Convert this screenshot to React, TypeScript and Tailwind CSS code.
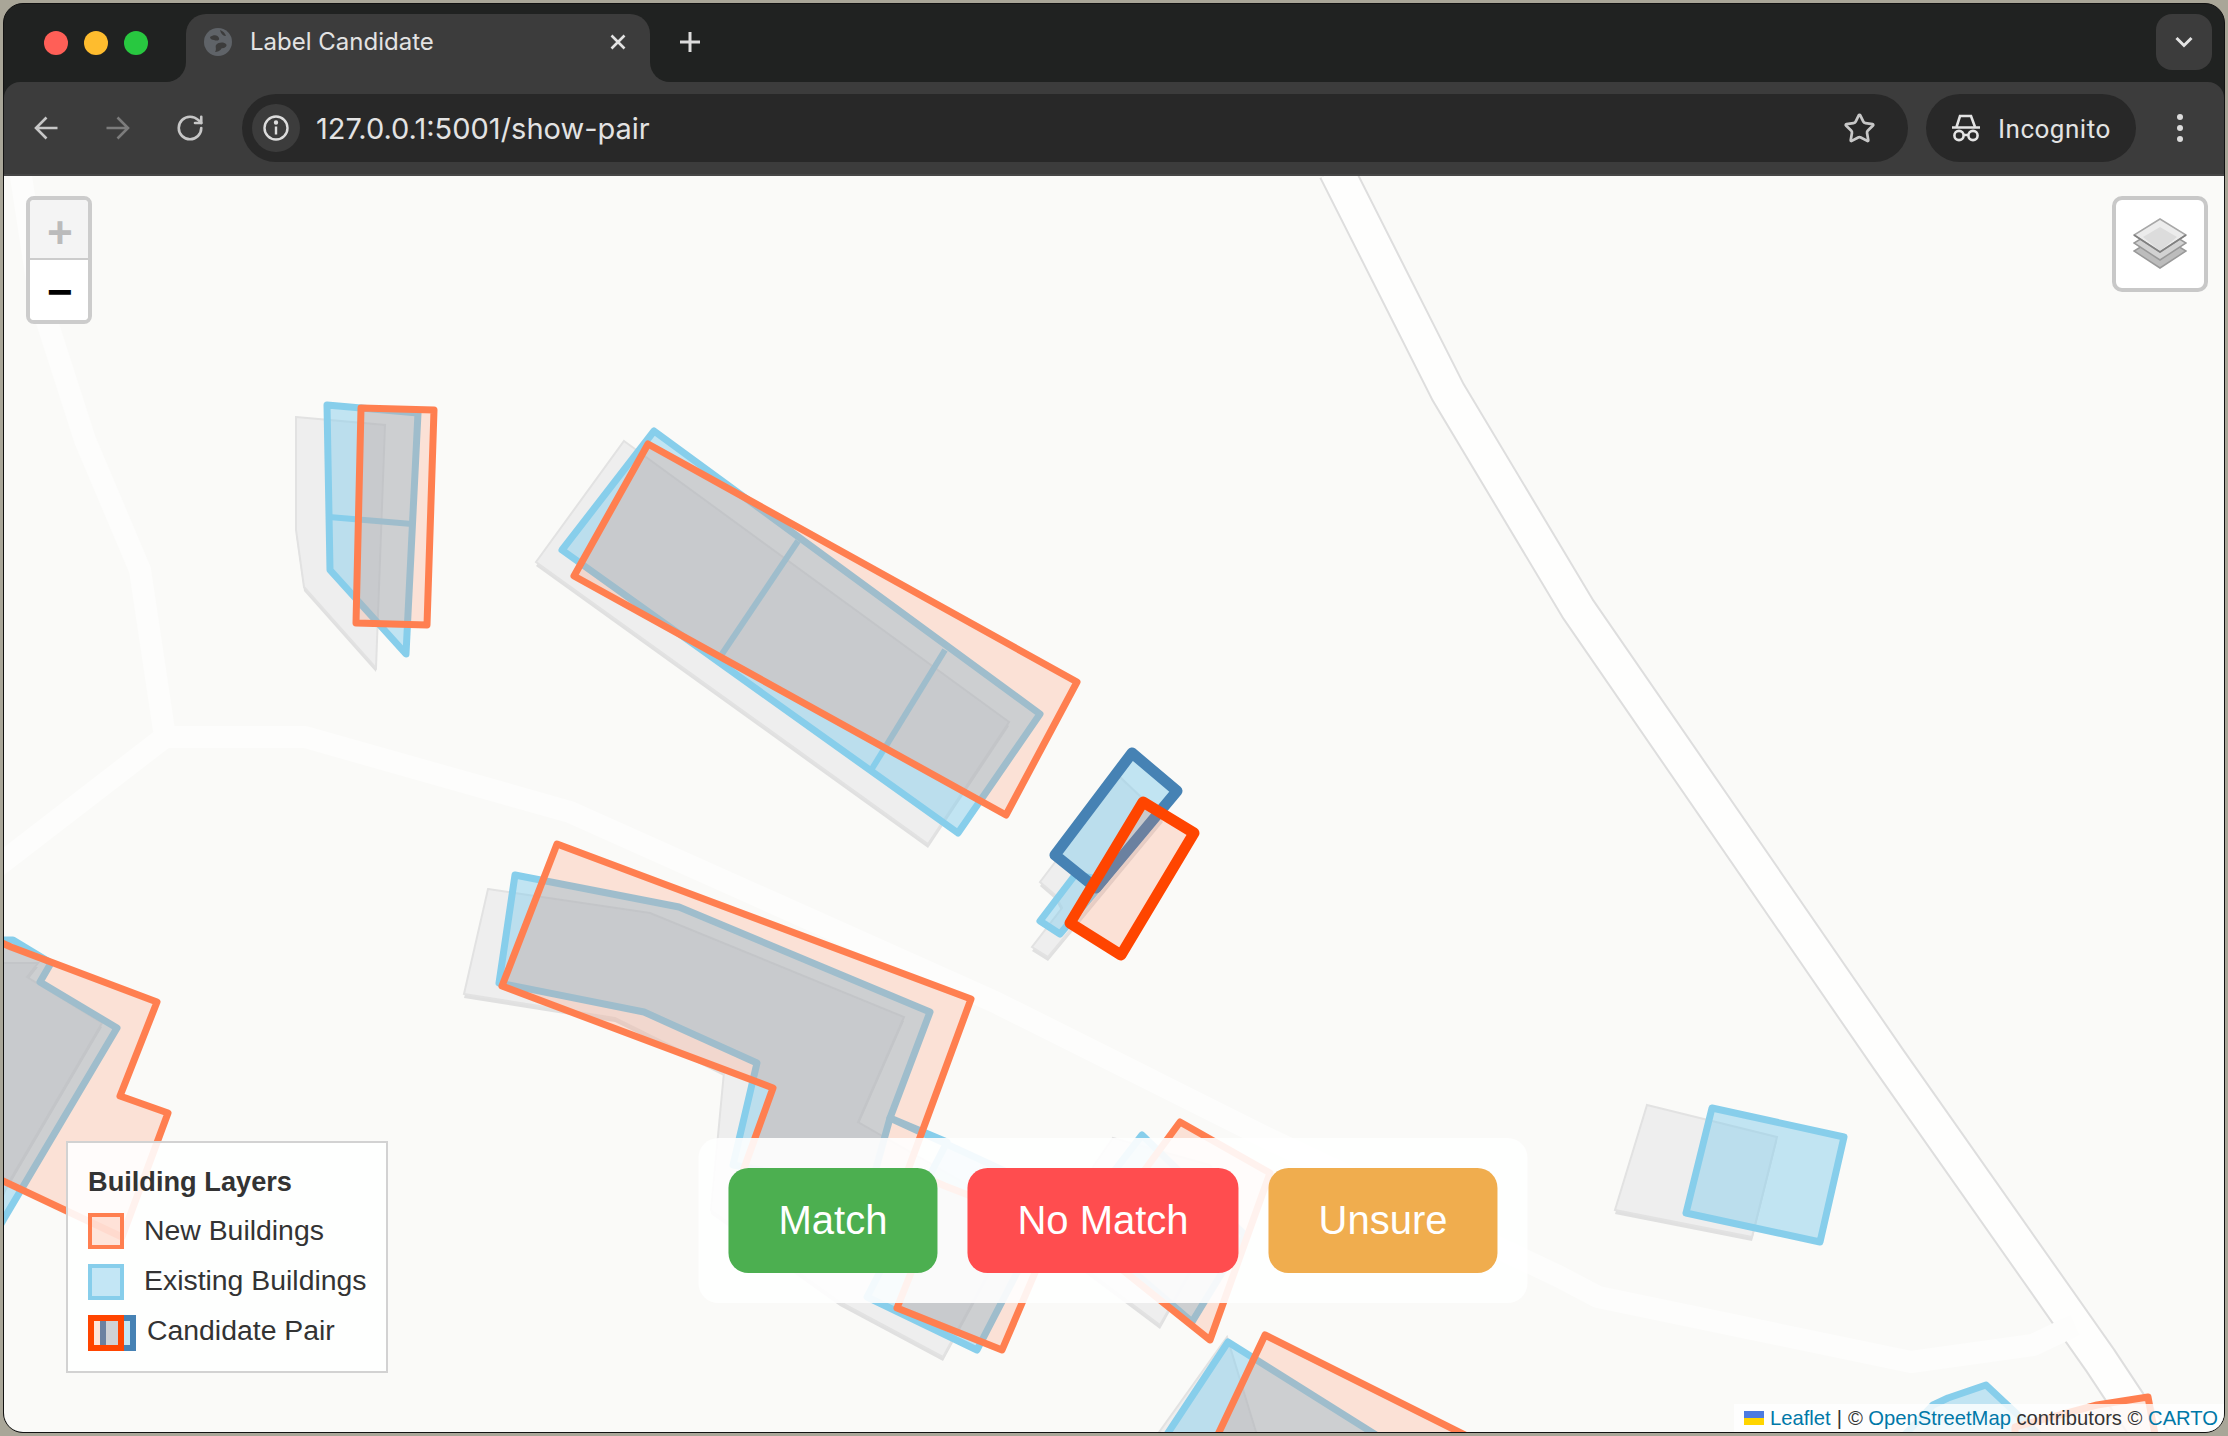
import React from "react";
import { RotateCw, Star } from "lucide-react";

const pts = (a: number[][]) => a.map((p) => p.join(",")).join(" ");

const bases: number[][][] = [
  [[296,417],[385,425],[376,668],[304,587],[296,530]],
  [[624,441],[1009,722],[928,844],[536,562]],
  [[1120,777],[1163,818],[1048,957],[1032,947],[1062,908],[1055,895],[1040,882]],
  [[488,889],[650,913],[904,1017],[858,1122],[1020,1215],[943,1357],[840,1302],[711,1210],[724,1072],[615,1018],[464,994]],
  [[-20,963],[38,963],[27,977],[102,1023],[6,1187],[-20,1250]],
  [[1647,1105],[1777,1137],[1755,1225],[1752,1237],[1615,1210]],
  [[1113,1138],[1210,1165],[1230,1200],[1160,1325],[1060,1250],[1093,1167]],
  [[1227,1337],[1150,1445],[1260,1445]],
];

const blues: number[][][] = [
  [[327,405],[418,413],[406,654],[330,570]],
  [[654,431],[1040,714],[958,833],[562,550]],
  [[1075,875],[1040,921],[1060,934],[1105,880]],
  [[515,875],[679,907],[930,1012],[890,1118],[870,1190],[733,1165],[757,1063],[644,1012],[499,983]],
  [[890,1118],[1057,1195],[977,1350],[867,1297],[947,1142]],
  [[-20,940],[13,940],[51,963],[40,982],[117,1028],[5,1217],[-20,1260]],
  [[1712,1108],[1844,1137],[1820,1242],[1686,1213]],
  [[1142,1135],[1245,1235],[1192,1322],[1085,1230],[1115,1170]],
  [[1228,1342],[1392,1445],[1160,1445]],
  [[1986,1385],[1948,1398],[1933,1405],[1895,1445],[2050,1445]],
];

const blueLines: number[][][] = [
  [[329,517],[412,524]],
  [[798,541],[722,654]],
  [[945,650],[870,772]],
];

const oranges: number[][][] = [
  [[361,408],[434,410],[427,625],[356,623]],
  [[648,444],[1077,682],[1006,815],[574,576]],
  [[557,844],[971,999],[908,1170],[945,1186],[1054,1228],[1002,1350],[897,1308],[930,1225],[738,1185],[773,1088],[502,986]],
  [[-20,933],[11,947],[157,1002],[120,1096],[168,1113],[122,1237],[-20,1170]],
  [[1180,1122],[1270,1173],[1210,1340],[1085,1240],[1130,1190]],
  [[1265,1335],[1485,1445],[1213,1445]],
  [[2148,1397],[2097,1405],[2015,1427],[2015,1445],[2157,1445]],
];

function MapArt() {
  const mainRoad = "1336,170 1448,392 1578,609 1889,1060 2100,1360 2153,1440";
  return (
    <svg viewBox="4 176 2220 1256" className="absolute inset-0 w-full h-full">
      <polyline points={mainRoad} fill="none" stroke="#dedede" strokeWidth="37" />
      <g fill="none" strokeLinejoin="round">
        <polyline points={mainRoad} strokeWidth="33" stroke="#fefefd" />
        <polyline points="-5,868 165,737 305,737 570,812 995,1002 1265,1137 1560,1277 1598,1297 1911,1362 2033,1345 2075,1325" strokeWidth="22" stroke="#fdfdfc" />
        <polyline points="20,170 40,300 85,440 140,570 165,737" strokeWidth="22" stroke="#fdfdfc" />
      </g>
      {bases.map((b, i) => (
        <g key={i}>
          <polygon points={pts(b)} transform="translate(0 4)" fill="#e0e0e0" />
          <polygon points={pts(b)} fill="#eeeeee" stroke="#e2e2e2" strokeWidth="2" />
        </g>
      ))}
      {blues.map((b, i) => (
        <polygon key={i} points={pts(b)} fill="#87ceeb" fillOpacity="0.5" stroke="#87ceeb" strokeWidth="7" strokeLinejoin="round" />
      ))}
      {blueLines.map((b, i) => (
        <polyline key={i} points={pts(b)} fill="none" stroke="#87ceeb" strokeWidth="6" />
      ))}
      {oranges.map((b, i) => (
        <polygon key={i} points={pts(b)} fill="#ff7f50" fillOpacity="0.2" stroke="#ff7f50" strokeWidth="7" strokeLinejoin="round" />
      ))}
      <polygon points="1132,753 1177,791 1096,888 1055,855" fill="#87ceeb" fillOpacity="0.5" stroke="#4682b4" strokeWidth="11" strokeLinejoin="round" />
      <polygon points="1143,802 1194,833 1121,955 1070,923" fill="#ff7f50" fillOpacity="0.2" stroke="#ff4500" strokeWidth="11" strokeLinejoin="round" />
    </svg>
  );
}

function Globe() {
  return (
    <svg width="28" height="28" viewBox="0 0 28 28">
      <circle cx="14" cy="14" r="14" fill="#5f6368" />
      <path d="M6 9 C10 6 14 7 15 10 C16 13 12 13 10 12 C8 12 6 11 6 9 Z" fill="#3c3c3c" />
      <path d="M12 17 C15 14 19 14 22 16 C24 18 20 21 18 20 C16 23 13 24 11 24 C13 21 11 19 12 17 Z" fill="#3c3c3c" />
      <path d="M16 2 C19 3 21 5 22 8 C19 8 17 6 16 2 Z" fill="#3c3c3c" />
    </svg>
  );
}

function LayersIcon() {
  return (
    <svg width="54" height="52" viewBox="0 0 54 52">
      <polygon points="27,17 53,33 27,50 1,33" fill="#bcbcbc" stroke="#999999" strokeWidth="1.5" />
      <polygon points="27,9 53,25 27,42 1,25" fill="#d2d2d2" stroke="#999999" strokeWidth="1.5" />
      <polygon points="27,1 53,17 27,34 1,17" fill="#ececec" stroke="#a8a8a8" strokeWidth="1.5" />
      <polygon points="27,9 44,19 27,33 10,19" fill="#dcdcdc" />
      <polyline points="1,17 27,34 53,17" fill="none" stroke="#808080" strokeWidth="1.5" />
    </svg>
  );
}

function Incognito() {
  return (
    <svg width="30" height="28" viewBox="0 0 30 28" fill="none" stroke="#e3e3e3" strokeWidth="2.6">
      <path d="M5.5 13 L9 2 H20 L24 13" />
      <path d="M1 13.5 H29" />
      <circle cx="8" cy="21.5" r="4.6" />
      <circle cx="22" cy="21.5" r="4.6" />
      <path d="M12.5 21 H17.5" />
    </svg>
  );
}

export default function App() {
  return (
    <div className="w-[2228px] h-[1436px] bg-[#a9a698] p-[3px] overflow-hidden font-['Roboto',sans-serif]">
      <div className="w-full h-full rounded-[20px] border border-[#111111] overflow-hidden flex flex-col bg-[#202221]">
        {/* tab strip */}
        <div className="h-[78px] shrink-0 flex items-start">
          <div className="ml-[40px] mt-[27px] flex gap-[16px]">
            <span className="w-[24px] h-[24px] rounded-full bg-[#ff5f57]" />
            <span className="w-[24px] h-[24px] rounded-full bg-[#febc2e]" />
            <span className="w-[24px] h-[24px] rounded-full bg-[#28c840]" />
          </div>
          <div className="relative ml-[38px] mt-[10px] w-[464px] h-[68px] bg-[#3c3c3c] rounded-t-[20px] flex items-center pl-[18px] pb-[12px]">
            <div className="absolute left-[-20px] bottom-0 w-[20px] h-[20px] bg-[#3c3c3c]">
              <div className="w-full h-full bg-[#202221] rounded-br-[20px]" />
            </div>
            <div className="absolute right-[-20px] bottom-0 w-[20px] h-[20px] bg-[#3c3c3c]">
              <div className="w-full h-full bg-[#202221] rounded-bl-[20px]" />
            </div>
            <Globe />
            <span className="ml-[18px] text-[24px] text-[#e3e3e3] font-['Inter',sans-serif] whitespace-nowrap">Label Candidate</span>
            <svg className="ml-auto mr-[24px]" width="16" height="16" viewBox="0 0 16 16" stroke="#e3e3e3" strokeWidth="2.6" fill="none">
              <path d="M1.5 1.5 L14.5 14.5 M14.5 1.5 L1.5 14.5" />
            </svg>
          </div>
          <svg className="ml-[30px] mt-[28px]" width="20" height="20" viewBox="0 0 20 20" stroke="#dcdcdc" strokeWidth="3" fill="none">
            <path d="M10 0 V20 M0 10 H20" />
          </svg>
          <div className="ml-auto mr-[12px] mt-[10px] w-[56px] h-[56px] rounded-[16px] bg-[#3c3c3c] flex items-center justify-center">
            <svg width="18" height="12" viewBox="0 0 18 12" stroke="#e3e3e3" strokeWidth="3" fill="none">
              <path d="M1.5 2 L9 9.5 L16.5 2" />
            </svg>
          </div>
        </div>
        {/* toolbar */}
        <div className="h-[94px] shrink-0 bg-[#3c3c3c] rounded-t-[16px] border-b-[2px] border-[#464646] flex items-center pl-[6px]">
          <div className="w-[72px] flex justify-center">
            <svg width="24" height="24" viewBox="0 0 24 24" stroke="#c7c7c7" strokeWidth="2.6" fill="none">
              <path d="M23.5 12 H2 M12.5 1.5 L2 12 L12.5 22.5" />
            </svg>
          </div>
          <div className="w-[72px] flex justify-center">
            <svg width="24" height="24" viewBox="0 0 24 24" stroke="#7c7c7c" strokeWidth="2.6" fill="none">
              <path d="M0.5 12 H22 M11.5 1.5 L22 12 L11.5 22.5" />
            </svg>
          </div>
          <div className="w-[72px] flex justify-center">
            <RotateCw size={30} color="#c7c7c7" strokeWidth={2.1} />
          </div>
          <div className="ml-[16px] flex-1 h-[68px] rounded-full bg-[#282828] flex items-center pl-[10px] pr-[32px]">
            <div className="w-[48px] h-[48px] rounded-full bg-[#3c3c3c] flex items-center justify-center">
              <svg width="26" height="26" viewBox="0 0 26 26" fill="none" stroke="#dcdcdc" strokeWidth="2.4">
                <circle cx="13" cy="13" r="11.5" />
                <path d="M13 11.5 V19.5" />
                <circle cx="13" cy="7.5" r="1" fill="#dcdcdc" />
              </svg>
            </div>
            <span className="ml-[16px] mt-[1px] text-[29px] text-[#e3e3e3] font-['Inter',sans-serif] whitespace-nowrap">127.0.0.1:5001/show-pair</span>
            <Star className="ml-auto" size={33} color="#c7c7c7" strokeWidth={2} />
          </div>
          <div className="ml-[18px] w-[210px] h-[68px] rounded-full bg-[#282828] flex items-center pl-[25px]">
            <Incognito />
            <span className="ml-[17px] mt-[2px] text-[26px] text-[#e3e3e3] whitespace-nowrap tracking-[0.5px]">Incognito</span>
          </div>
          <div className="w-[88px] flex flex-col items-center gap-[5px]">
            <span className="w-[6px] h-[6px] rounded-full bg-[#dcdcdc]" />
            <span className="w-[6px] h-[6px] rounded-full bg-[#dcdcdc]" />
            <span className="w-[6px] h-[6px] rounded-full bg-[#dcdcdc]" />
          </div>
        </div>
        {/* map */}
        <div className="relative flex-1 bg-[#fafaf8] overflow-hidden font-['Liberation_Sans',sans-serif]">
          <MapArt />
          <div className="absolute left-[22px] top-[20px] w-[66px] h-[128px] border-[4px] border-[#cccccc] rounded-[8px] overflow-hidden flex flex-col font-['Liberation_Mono',monospace] font-bold">
            <div className="h-[60px] bg-[#f4f4f4] border-b-[2px] border-[#cccccc] flex items-center justify-center pt-[14px] pl-[2px] text-[44px] leading-none text-[#bbbbbb]">+</div>
            <div className="flex-1 bg-white flex items-center justify-center pt-[10px] pl-[2px] text-[44px] leading-none text-black">−</div>
          </div>
          <div className="absolute right-[16px] top-[20px] w-[96px] h-[96px] border-[4px] border-[#c8c8c8] rounded-[10px] bg-white flex items-center justify-center">
            <LayersIcon />
          </div>
          {/* legend */}
          <div className="absolute left-[62px] bottom-[59px] border-[2px] border-[#d2d2d2] bg-white/90 p-[20px] pr-[19px] text-[#333333] text-[28.4px]">
            <div className="h-[38px] leading-[38px] mb-[12px] font-bold text-[27.2px] whitespace-nowrap">Building Layers</div>
            <div className="flex items-center h-[36px] mb-[15px]">
              <span className="w-[36px] h-[36px] border-[4px] border-[#ff7f50] bg-[#ff7f50]/20" />
              <span className="ml-[20px] -mt-[2px] whitespace-nowrap">New Buildings</span>
            </div>
            <div className="flex items-center h-[36px] mb-[15px]">
              <span className="w-[36px] h-[36px] border-[4px] border-[#87ceeb] bg-[#87ceeb]/50" />
              <span className="ml-[20px] -mt-[4px] whitespace-nowrap">Existing Buildings</span>
            </div>
            <div className="flex items-center h-[36px]">
              <span className="relative w-[48px] h-[36px]">
                <span className="absolute left-[12px] top-0 w-[36px] h-[36px] border-[6px] border-[#4682b4] bg-[#87ceeb]/50" />
                <span className="absolute left-0 top-0 w-[36px] h-[36px] border-[6px] border-[#ff4500] bg-[#ff7f50]/20" />
              </span>
              <span className="ml-[11px] -mt-[5px] whitespace-nowrap">Candidate Pair</span>
            </div>
          </div>
          {/* actions */}
          <div className="absolute left-[calc(50%-1px)] -translate-x-1/2 bottom-[129px] bg-white/90 rounded-[20px] p-[30px] flex gap-[30px]">
            <button className="px-[50px] py-[30px] leading-[45px] text-[40px] text-white bg-[#4caf50] rounded-[20px] whitespace-nowrap">Match</button>
            <button className="px-[50px] py-[30px] leading-[45px] text-[40px] text-white bg-[#ff4d4f] rounded-[20px] whitespace-nowrap">No Match</button>
            <button className="px-[50px] py-[30px] leading-[45px] text-[40px] text-white bg-[#f0ad4e] rounded-[20px] whitespace-nowrap">Unsure</button>
          </div>
          {/* attribution */}
          <div className="absolute right-0 bottom-0 h-[28px] bg-white/80 pl-[10px] pr-[6px] flex items-center text-[20.2px] text-[#333333] whitespace-nowrap">
            <svg className="mr-[6px]" width="20" height="14" viewBox="0 0 20 14">
              <rect width="20" height="7" fill="#4c7be1" />
              <rect y="7" width="20" height="7" fill="#ffd500" />
            </svg>
            <span className="text-[#0078a8]">Leaflet</span>
            <span className="mx-[6px]">|</span>
            <span>©&nbsp;</span>
            <span className="text-[#0078a8]">OpenStreetMap</span>
            <span>&nbsp;contributors ©&nbsp;</span>
            <span className="text-[#0078a8]">CARTO</span>
          </div>
        </div>
      </div>
    </div>
  );
}
